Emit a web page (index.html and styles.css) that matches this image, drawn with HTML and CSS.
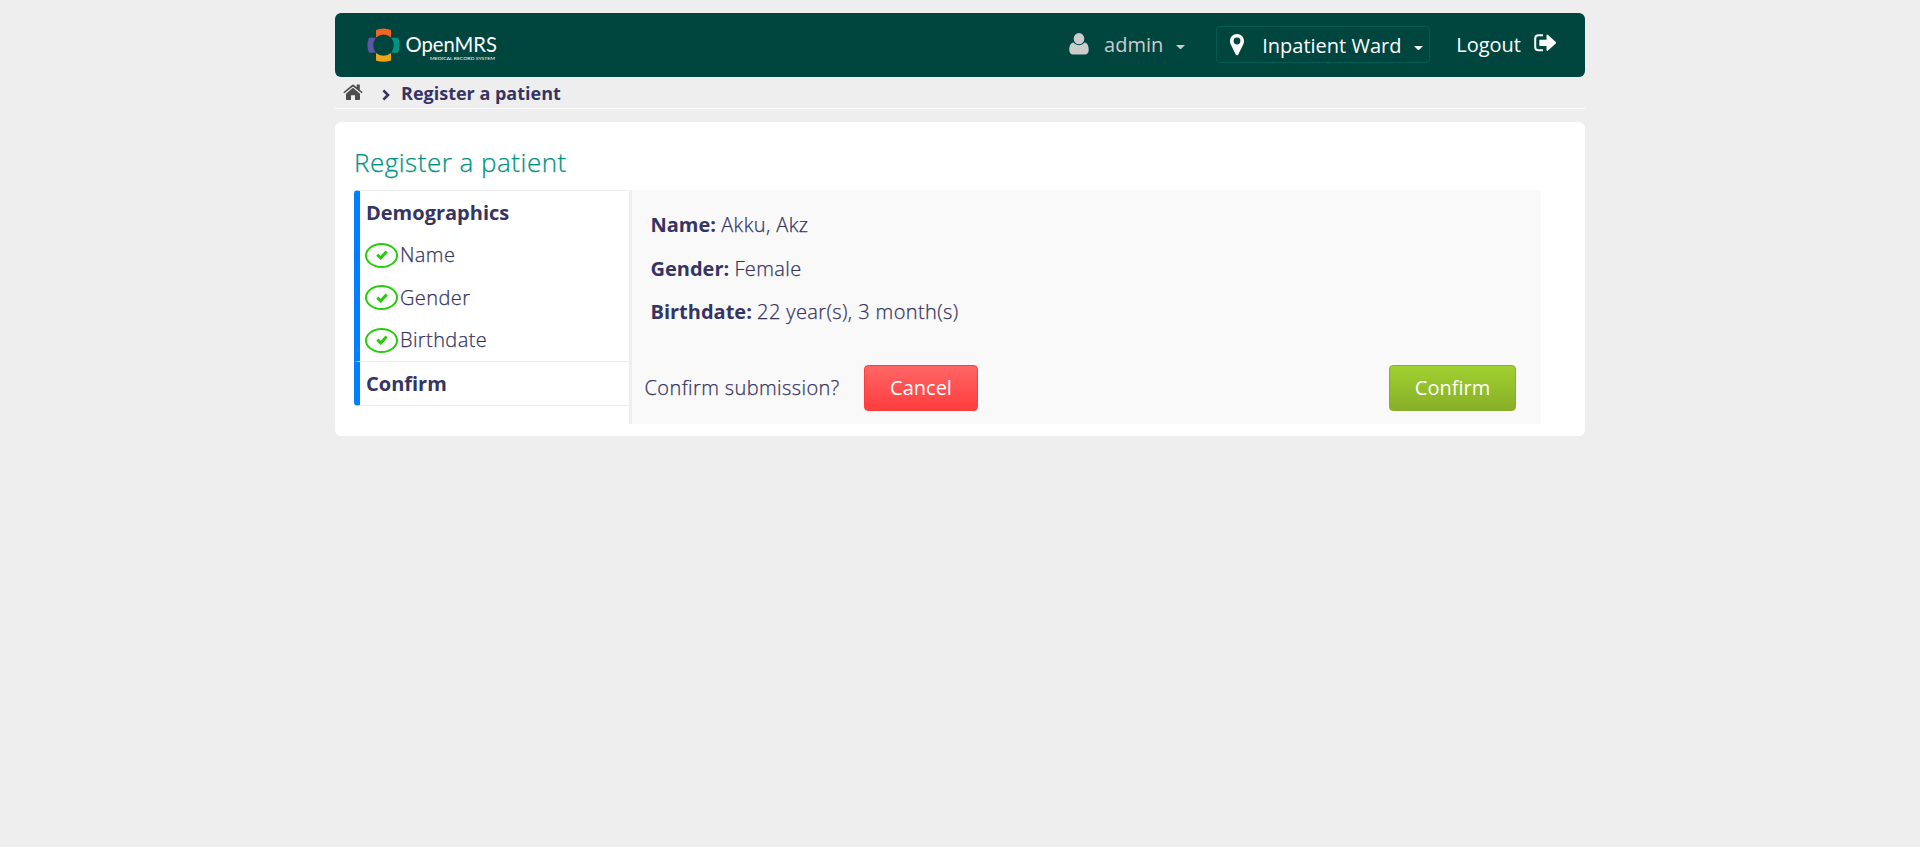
FILE: index.html
```html
<!DOCTYPE html>
<html lang="en">
<head>
<meta charset="utf-8">
<title>Register a patient</title>
<link rel="stylesheet" href="styles.css">
</head>
<body>
<div class="page">
  <header class="header">
    <svg class="logo" width="134" height="40" viewBox="0 0 134 40">
      <g transform="translate(0 .7)">
      <path fill="#f26522" d="M10 2.200Q17.500 -.8 25 2.200V9.800Q17.500 4 10 9.800Z"/>
      <path fill="#eea616" d="M10 32.800Q17.500 35.500 25 32.800V25.200Q17.500 31 10 25.200Z"/>
      <path fill="#5b57a6" d="M3 10Q-.2 17.500 3 25H9.800Q4.500 17.500 9.800 10Z"/>
      <path fill="#009384" d="M32 10Q35.200 17.500 32 25H25.200Q30.500 17.500 25.200 10Z"/>
      </g>
      <text class="logo-name" x="39.500" y="25" textLength="91.500" lengthAdjust="spacingAndGlyphs">OpenMRS</text>
      <text class="logo-tag" x="64" y="33" textLength="65" lengthAdjust="spacingAndGlyphs">MEDICAL RECORD SYSTEM</text>
    </svg>
    <nav class="account">
      <div class="user">
        <svg width="20" height="22" viewBox="0 0 20 22" fill="currentColor"><ellipse cx="10" cy="5.700" rx="5.300" ry="5.600"/><path d="M4.600 9.500C1.300 10 .3 13 .3 17C.3 20 1.800 21.400 4 21.400H16C18.200 21.400 19.700 20 19.700 17C19.700 13 18.700 10 15.400 9.500C14 11.300 12 12.300 10 12.300S6 11.300 4.600 9.500Z"/></svg>
        <span>admin</span>
        <i class="caret"></i>
      </div>
      <div class="location">
        <svg width="14" height="22" viewBox="0 0 14 22" fill="currentColor"><path fill-rule="evenodd" d="M7 0C3 0 0 3 0 7C0 8.500.3 9.500.8 10.500L5.700 20.600C6.200 21.700 7.800 21.700 8.300 20.600L13.200 10.500C13.700 9.500 14 8.500 14 7C14 3 11 0 7 0ZM7 3.600A3.400 3.400 0 1 1 7 10.400A3.400 3.400 0 1 1 7 3.600Z"/></svg>
        <span>Inpatient Ward</span>
        <i class="caret"></i>
      </div>
      <div class="logout">
        <span>Logout</span>
        <svg width="22" height="18" viewBox="0 0 22 18"><path d="M9 1.200H4.500Q1.200 1.200 1.200 4.500V13Q1.200 16.300 4.500 16.300H9" fill="none" stroke="currentColor" stroke-width="2"/><path fill="currentColor" d="M6 5.700H12.500V1.200Q12.800.2 13.800.8L21.800 8.100Q22.300 8.800 21.800 9.400L13.800 16.800Q12.800 17.400 12.500 16.300V12H6Q5.300 12 5.300 11.300V6.400Q5.300 5.700 6 5.700Z"/></svg>
      </div>
    </nav>
  </header>
  <div class="breadcrumbs">
    <svg width="20" height="17" viewBox="0 0 20 17" fill="#4d4d4d"><path d="M10 3.800L3 9.700V15.300Q3 16 3.700 16H8V11.300H12V16H16.300Q17 16 17 15.300V9.700Z"/><path d="M.3 8.200L9 .9Q10 .2 11 .9L13.700 3.200V.4H16.800V5.700L19.700 8.200L18.700 9.300L10 2.400L1.300 9.300Z"/></svg>
    <svg class="chevron" width="8" height="12" viewBox="0 0 8 12"><path d="M1.400 1.300L6 6L1.400 10.700" fill="none" stroke="#363463" stroke-width="2.600"/></svg>
    <span>Register a patient</span>
  </div>
  <main class="content">
    <h1 class="title">Register a patient</h1>
    <div class="form">
      <ul class="steps">
        <li class="section first">
          <div class="section-title">Demographics</div>
          <div class="step"><span class="tick"><svg width="12" height="10" viewBox="0 0 12 10"><path d="M1.300 4.700L4.700 8L10.600 1.500" fill="none" stroke="#24cc0a" stroke-width="3"/></svg></span>Name</div>
          <div class="step"><span class="tick"><svg width="12" height="10" viewBox="0 0 12 10"><path d="M1.300 4.700L4.700 8L10.600 1.500" fill="none" stroke="#24cc0a" stroke-width="3"/></svg></span>Gender</div>
          <div class="step"><span class="tick"><svg width="12" height="10" viewBox="0 0 12 10"><path d="M1.300 4.700L4.700 8L10.600 1.500" fill="none" stroke="#24cc0a" stroke-width="3"/></svg></span>Birthdate</div>
        </li>
        <li class="section last">
          <div class="section-title">Confirm</div>
        </li>
      </ul>
      <section class="summary">
        <p class="field"><b>Name:</b> <span>Akku, Akz</span></p>
        <p class="field"><b>Gender:</b> <span>Female</span></p>
        <p class="field"><b>Birthdate:</b> <span>22 year(s), 3 month(s)</span></p>
        <div class="actions">
          <span class="question">Confirm submission?</span>
          <button class="button cancel">Cancel</button>
          <button class="button confirm">Confirm</button>
        </div>
      </section>
    </div>
  </main>
</div>
</body>
</html>
```
FILE: styles.css
```css
* { box-sizing: border-box; }
body {
  margin: 0;
  background: #eee;
  color: #363463;
  font: 300 20px "Open Sans", sans-serif;
}
.page { width: 1250px; margin: 0 auto; padding-top: 13px; }
.header {
  display: flex;
  justify-content: space-between;
  height: 64px;
  padding: 0 29px 0 31px;
  border-radius: 6px;
  background: #00463f;
  color: #fff;
}
.logo { margin-top: 14px; overflow: visible; fill: #fff; }
.logo-name { font: 400 21.500px Lato, sans-serif; }
.logo-tag { font: 400 4.500px Lato, sans-serif; }
.account { display: flex; align-items: flex-start; font-weight: 400; line-height: 36px; }
.account span { white-space: nowrap; }
.user, .location, .logout { display: flex; }
.user { margin: 14px 31px 0 0; color: #ccc; }
.user svg { margin: 6px 15px 0 0; }
.caret {
  width: 9px;
  height: 5px;
  margin: 18px 0 0 13px;
  border: solid transparent;
  border-width: 4px 4.500px 0;
  border-top-color: currentColor;
}
.location {
  width: 214px;
  height: 37px;
  margin: 13px 26px 0 0;
  padding-left: 13px;
  border: 1px solid #005b53;
  border-radius: 4px;
}
.location svg { margin: 7px 18px 0 0; }
.location span { margin-top: 1px; }
.location .caret { margin-top: 19px; }
.logout { margin-top: 14px; }
.logout svg { margin: 7px 0 0 13px; }
.breadcrumbs {
  display: flex;
  height: 32px;
  padding-left: 8px;
  border-bottom: 1px solid #fff;
  font-size: 18px;
  font-weight: 700;
  line-height: 33px;
}
.breadcrumbs svg { margin-top: 7px; }
.breadcrumbs .chevron { margin: 12px 11px 0 19px; }
.content {
  height: 314px;
  margin-top: 13px;
  padding: 22px 44px 0 19px;
  border-radius: 6px;
  background: #fff;
}
.title {
  margin: 0;
  height: 46px;
  color: #009384;
  font-size: 26px;
  font-weight: 300;
  line-height: 37px;
  letter-spacing: .5px;
  -webkit-text-stroke: .25px;
}
.form { display: flex; height: 234px; }
.steps { width: 275px; margin: 0; padding: 0; list-style: none; }
.section { border-left: 6px solid #007fff; }
.first { height: 171px; padding-top: 1px; border-top: 1px solid #eee; border-top-left-radius: 4px; }
.last { height: 45px; padding-top: 1px; border-top: 1px solid #eee; border-bottom: 1px solid #eee; border-bottom-left-radius: 4px; }
.section-title { height: 42px; padding-left: 6px; font-weight: 700; line-height: 42px; }
.step { display: flex; align-items: center; height: 42.500px; padding-left: 5px; line-height: 42px; }
.step, .field span, .question { letter-spacing: .4px; -webkit-text-stroke: .25px; }
.tick {
  display: flex;
  align-items: center;
  justify-content: center;
  width: 33px;
  height: 25px;
  margin-right: 2px;
  border: 2px solid #24cc0a;
  border-radius: 50%;
}
.summary { flex: 1; padding-top: 13px; border-left: 3px solid #eee; background: #f9f9f9; }
.field { margin: 0; height: 43.500px; padding-left: 18.500px; line-height: 43px; }
.field b { font-weight: 700; }
.actions { display: flex; align-items: center; margin: 31px 25px 0 12.500px; }
.question { width: 219.500px; }
.button {
  height: 46px;
  padding: 0;
  border-radius: 4px;
  color: #fff;
  font: 400 20px "Open Sans", sans-serif;
}
.cancel { width: 114px; border: 1px solid #ff3d3d; background: linear-gradient(#ff6666, #ff3d3d); }
.confirm { width: 127px; margin-left: auto; border: 1px solid #88af28; background: linear-gradient(#a0d030, #88af28); }
```
